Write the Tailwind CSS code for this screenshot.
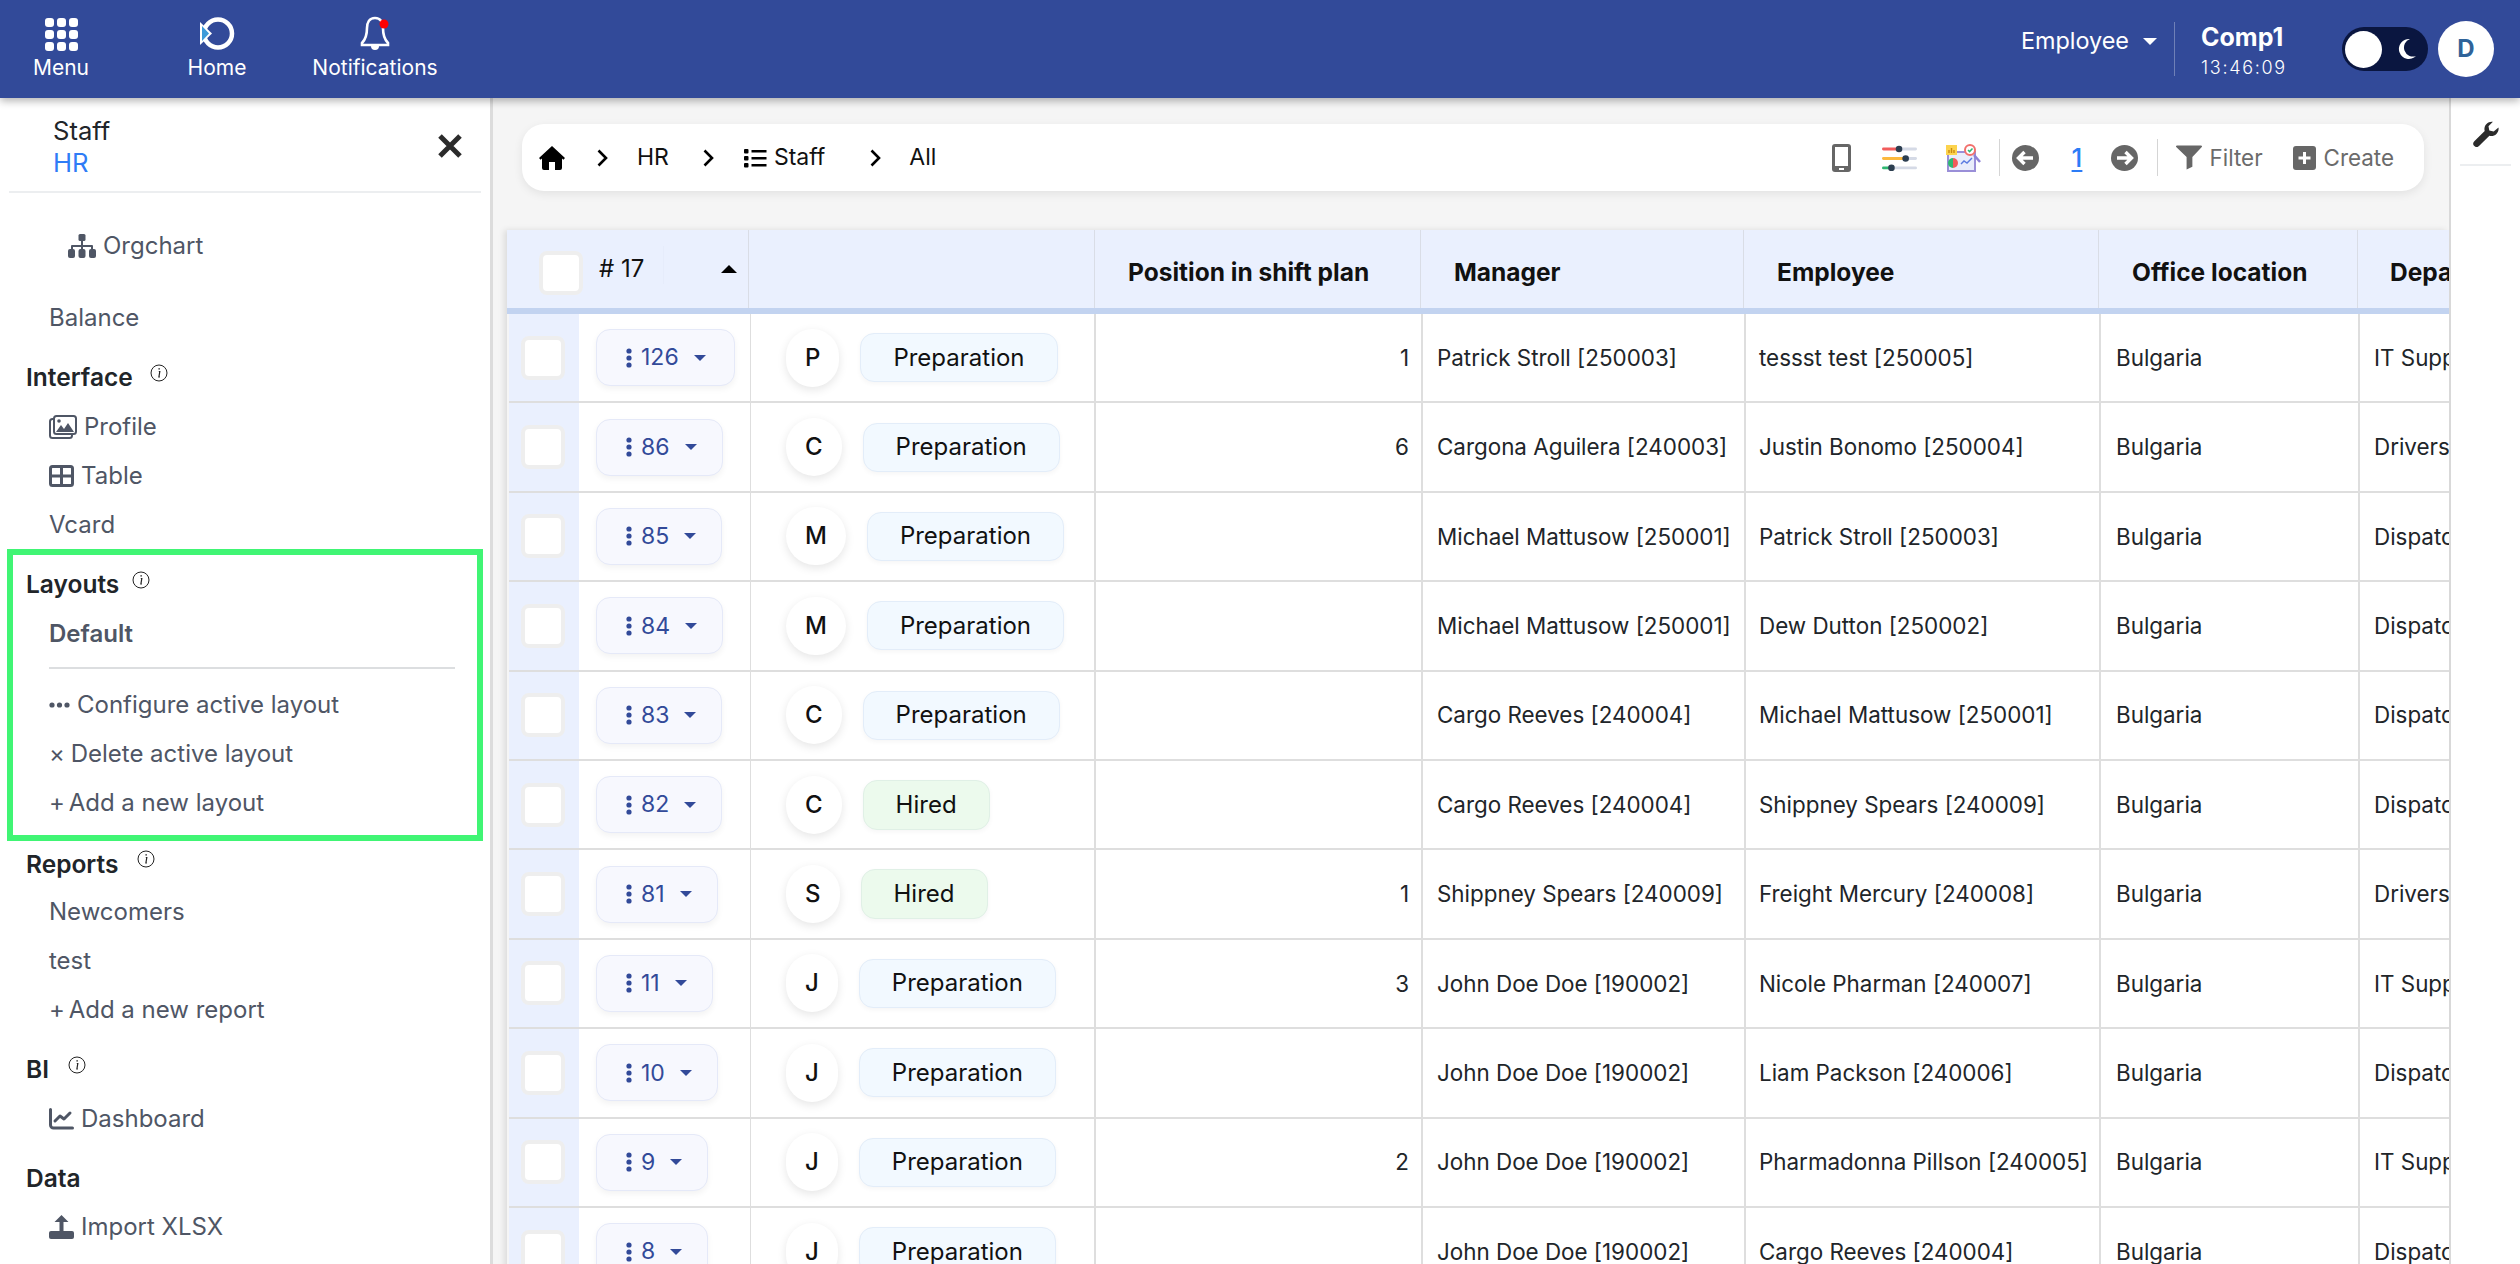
<!DOCTYPE html>
<html>
<head>
<meta charset="utf-8">
<title>Staff</title>
<script src="https://cdn.jsdelivr.net/npm/@tailwindcss/browser@4"></script>
</head>
<body class="m-0 font-['Inter',sans-serif]">
<div class="w-[2520px] h-[1264px] overflow-hidden flex flex-col bg-[#f5f5f5]">
  <!-- top bar -->
  <header class="relative z-10 h-[98px] shrink-0 bg-[#324a99] shadow-[0_3px_8px_rgba(0,0,0,0.3)] flex items-start text-white">
    <div class="w-[122px] flex flex-col items-center pt-[17px]">
      <svg width="34" height="34" viewBox="0 0 34 34" fill="#fff"><rect x="1" y="1" width="9" height="9" rx="3"/><rect x="13" y="1" width="9" height="9" rx="3"/><rect x="25" y="1" width="9" height="9" rx="3"/><rect x="1" y="13" width="9" height="9" rx="3"/><rect x="13" y="13" width="9" height="9" rx="3"/><rect x="25" y="13" width="9" height="9" rx="3"/><rect x="1" y="25" width="9" height="9" rx="3"/><rect x="13" y="25" width="9" height="9" rx="3"/><rect x="25" y="25" width="9" height="9" rx="3"/></svg>
      <span class="text-[21px] leading-[24px] mt-[5px]">Menu</span>
    </div>
    <div class="w-[190px] flex flex-col items-center pt-[16px]">
      <svg width="36" height="35" viewBox="0 0 36 35"><circle cx="19" cy="17.5" r="14" fill="none" stroke="#fff" stroke-width="4.5"/><path d="M1 6 L13 17.5 L1 29Z" fill="#fff"/><path d="M3 10 L10 17.5 L3 25Z" fill="#3d9ad9"/></svg>
      <span class="text-[21px] leading-[24px] mt-[5px]">Home</span>
    </div>
    <div class="w-[126px] flex flex-col items-center pt-[16px]">
      <svg width="36" height="35" viewBox="0 0 36 35"><path d="M18 2c-6 0-8 5-8 10 0 7-1 11-5 15v2h26v-2c-4-4-5-8-5-15 0-5-2-10-8-10Z" fill="none" stroke="#fff" stroke-width="2.6"/><path d="M14 30a4 4 0 0 0 8 0Z" fill="#fff"/><circle cx="27" cy="8" r="4.5" fill="#f00"/></svg>
      <span class="text-[21px] leading-[24px] mt-[5px] whitespace-nowrap">Notifications</span>
    </div>
    <div class="flex-1"></div>
    <div class="flex items-center h-[98px]">
      <span class="text-[23.4px] leading-[30px] -mt-[16px]">Employee</span>
      <span class="ml-[14px] -mt-[16px] w-0 h-0 border-x-[7px] border-x-transparent border-t-[7px] border-t-white"></span>
      <div class="ml-[17px] w-px h-[54px] bg-white/30"></div>
      <div class="ml-[26px] w-[141px] flex flex-col pt-[2px]">
        <span class="text-[25px] leading-[30px] font-bold">Comp1</span>
        <span class="text-[18px] leading-[22px] mt-[5px] font-light tracking-[1.7px]">13:46:09</span>
      </div>
      <div class="w-[86px] h-[44px] rounded-full bg-[#0a1640] flex items-center justify-between pl-[3px] pr-[11px]">
        <span class="w-[37px] h-[37px] rounded-full bg-white"></span>
        <svg width="20" height="22" viewBox="0 0 20 22"><path d="M13 1a10 10 0 1 0 6 17A9 9 0 0 1 13 1Z" fill="#fff"/></svg>
      </div>
      <div class="ml-[10px] mr-[26px] w-[56px] h-[56px] rounded-full bg-white flex items-center justify-center text-[#2f6399] font-bold text-[24px]">D</div>
    </div>
  </header>

  <div class="flex-1 flex min-h-0">
    <!-- sidebar -->
    <aside class="w-[493px] shrink-0 bg-white border-r-[3px] border-[#dcdcdc] overflow-hidden flex flex-col text-[24px] text-[#4f5665] pl-[7px]">
      <div class="relative ml-[2px] w-[472px] h-[95px] shrink-0 border-b-2 border-[#eceef0] pl-[44px] pt-[17px] text-[25.6px]">
        <div class="leading-[32px] text-[#212529]">Staff</div>
        <div class="leading-[32px] text-[#2f7cf6]">HR</div>
        <svg class="absolute left-[428px] top-[35px]" width="26" height="26" viewBox="0 0 26 26"><path d="M3 3 23 23M23 3 3 23" stroke="#2b2b2b" stroke-width="5" fill="none"/></svg>
      </div>
      <div class="h-[49px] mt-[28px] ml-[61px] flex items-center gap-[7px] shrink-0">
        <svg width="28" height="24" viewBox="0 0 28 24" fill="#4f5665"><rect x="10.5" y="0" width="7" height="7" rx="1.5"/><path d="M13 7h2v4h9a1 1 0 0 1 1 1v4h-2v-3h-8v3h-2v-3H5v3H3v-4a1 1 0 0 1 1-1h9Z"/><rect x="0" y="15" width="7" height="9" rx="2"/><rect x="10.5" y="15" width="7" height="9" rx="2"/><rect x="21" y="15" width="7" height="9" rx="2"/></svg>
        Orgchart
      </div>
      <div class="h-[49px] mt-[23px] ml-[42px] flex items-center shrink-0">Balance</div>
      <div class="h-[49px] mt-[11px] ml-[19px] flex items-center font-semibold text-[24.5px] text-[#212529] shrink-0">Interface
        <svg class="ml-[17px] -mt-[10px]" width="18" height="18" viewBox="0 0 18 18"><circle cx="9" cy="9" r="8" fill="none" stroke="#222" stroke-width="1"/><path d="M8.4 4.8h1.5M8.8 7.5h1L8.9 13h1" fill="none" stroke="#222" stroke-width="1.2"/></svg>
      </div>
      <div class="h-[49px] ml-[42px] flex items-center gap-[7px] shrink-0">
        <svg width="28" height="24" viewBox="0 0 28 24"><rect x="1" y="4" width="22" height="19" rx="2.5" fill="none" stroke="#4f5665" stroke-width="2" transform="translate(0 0)"/><rect x="5" y="1" width="22" height="18" rx="2.5" fill="#fff" stroke="#4f5665" stroke-width="2"/><path d="M7 17l5-7 3 4 4-6 6 9Z" fill="#4f5665"/><circle cx="10" cy="6" r="1.8" fill="#4f5665"/></svg>
        Profile
      </div>
      <div class="h-[49px] ml-[42px] flex items-center gap-[7px] shrink-0">
        <svg width="25" height="22" viewBox="0 0 25 22"><rect x="1.5" y="1.5" width="22" height="19" rx="2" fill="none" stroke="#4f5665" stroke-width="3"/><path d="M12.5 1v20M1 11h23" stroke="#4f5665" stroke-width="3"/></svg>
        Table
      </div>
      <div class="h-[49px] ml-[42px] flex items-center shrink-0">Vcard</div>

      <div class="w-[476px] h-[292px] shrink-0 border-[6px] border-[#40f574] pt-[5px] pl-[13px] pr-[22px]">
        <div class="h-[49px] flex items-center font-semibold text-[24.5px] text-[#212529]">Layouts
          <svg class="ml-[13px] -mt-[10px]" width="18" height="18" viewBox="0 0 18 18"><circle cx="9" cy="9" r="8" fill="none" stroke="#222" stroke-width="1"/><path d="M8.4 4.8h1.5M8.8 7.5h1L8.9 13h1" fill="none" stroke="#222" stroke-width="1.2"/></svg>
        </div>
        <div class="h-[49px] ml-[23px] flex items-center font-semibold">Default</div>
        <div class="h-[2px] ml-[23px] mt-[9px] bg-[#dcdee0]"></div>
        <div class="h-[49px] ml-[23px] mt-[11px] flex items-center gap-[7px]">
          <svg width="21" height="6" viewBox="0 0 21 6" fill="#4f5665"><circle cx="3" cy="3" r="2.6"/><circle cx="10.5" cy="3" r="2.6"/><circle cx="18" cy="3" r="2.6"/></svg>
          Configure active layout
        </div>
        <div class="h-[49px] ml-[23px] flex items-center whitespace-pre"><span class="-mr-[1px]">×</span> Delete active layout</div>
        <div class="h-[49px] ml-[23px] flex items-center whitespace-pre"><span class="-mr-[3px]">+</span> Add a new layout</div>
      </div>

      <div class="h-[46px] ml-[19px] flex items-center font-semibold text-[24.5px] text-[#212529] shrink-0">Reports
        <svg class="ml-[19px] -mt-[10px]" width="18" height="18" viewBox="0 0 18 18"><circle cx="9" cy="9" r="8" fill="none" stroke="#222" stroke-width="1"/><path d="M8.4 4.8h1.5M8.8 7.5h1L8.9 13h1" fill="none" stroke="#222" stroke-width="1.2"/></svg>
      </div>
      <div class="h-[49px] ml-[42px] flex items-center shrink-0">Newcomers</div>
      <div class="h-[49px] ml-[42px] flex items-center shrink-0">test</div>
      <div class="h-[49px] ml-[42px] flex items-center whitespace-pre shrink-0"><span class="-mr-[3px]">+</span> Add a new report</div>
      <div class="h-[49px] mt-[11px] ml-[19px] flex items-center font-semibold text-[24.5px] text-[#212529] shrink-0">BI
        <svg class="ml-[19px] -mt-[10px]" width="18" height="18" viewBox="0 0 18 18"><circle cx="9" cy="9" r="8" fill="none" stroke="#222" stroke-width="1"/><path d="M8.4 4.8h1.5M8.8 7.5h1L8.9 13h1" fill="none" stroke="#222" stroke-width="1.2"/></svg>
      </div>
      <div class="h-[49px] ml-[42px] flex items-center gap-[7px] shrink-0">
        <svg width="25" height="22" viewBox="0 0 25 22" fill="none" stroke="#4f5665" stroke-width="3" stroke-linecap="round" stroke-linejoin="round"><path d="M1.5 1.5V17a3 3 0 0 0 3 3h19"/><path d="M6 13l5-5 4 3 6-6"/></svg>
        Dashboard
      </div>
      <div class="h-[49px] mt-[11px] ml-[19px] flex items-center font-semibold text-[24.5px] text-[#212529] shrink-0">Data</div>
      <div class="h-[48px] ml-[42px] flex items-center gap-[7px] shrink-0">
        <svg width="25" height="24" viewBox="0 0 25 24" fill="#4f5665"><path d="M12.5 0l7 7h-5v9h-4V7h-5Z"/><rect x="0" y="16" width="25" height="8" rx="2"/></svg>
        Import XLSX
      </div>
    </aside>

    <!-- main -->
    <main class="flex-1 min-w-0 overflow-hidden flex flex-col pt-[26px]">
      <!-- breadcrumb -->
      <div class="ml-[29px] mr-[25px] h-[67px] shrink-0 bg-white rounded-[22px] shadow-[0_3px_10px_rgba(0,0,0,0.08)] flex items-center text-[23px] text-[#111] pl-[17px]">
        <svg width="26" height="24" viewBox="0 0 26 24" fill="#000"><path d="M13 0 0 12l1.6 1.8L3 12.6V22a2 2 0 0 0 2 2h5v-8h6v8h5a2 2 0 0 0 2-2v-9.4l1.4 1.2L26 12Z"/></svg>
        <svg class="ml-[32px]" width="11" height="18" viewBox="0 0 11 18" fill="none" stroke="#000" stroke-width="2.6"><path d="M1.5 1.5 9 9l-7.5 7.5"/></svg>
        <span class="ml-[29px]">HR</span>
        <svg class="ml-[34px]" width="11" height="18" viewBox="0 0 11 18" fill="none" stroke="#000" stroke-width="2.6"><path d="M1.5 1.5 9 9l-7.5 7.5"/></svg>
        <svg class="ml-[30px]" width="23" height="20" viewBox="0 0 23 20" fill="#000"><rect x="0" y="1" width="4.5" height="4.5" rx="1"/><rect x="0" y="8" width="4.5" height="4.5" rx="1"/><rect x="0" y="15" width="4.5" height="4.5" rx="1"/><rect x="7.5" y="2" width="15" height="2.5"/><rect x="7.5" y="9" width="15" height="2.5"/><rect x="7.5" y="16" width="15" height="2.5"/></svg>
        <span class="ml-[7px]">Staff</span>
        <svg class="ml-[45px]" width="11" height="18" viewBox="0 0 11 18" fill="none" stroke="#000" stroke-width="2.6"><path d="M1.5 1.5 9 9l-7.5 7.5"/></svg>
        <span class="ml-[28px]">All</span>
        <div class="flex-1"></div>
        <svg width="19" height="28" viewBox="0 0 19 28"><rect x="0" y="0" width="19" height="28" rx="3" fill="#666"/><rect x="3" y="3" width="13" height="19" fill="#fff"/><rect x="7" y="24" width="5" height="2" fill="#fff"/></svg>
        <svg class="ml-[31px]" width="35" height="26" viewBox="0 0 37 26"><rect x="0" y="2" width="18" height="3" rx="1.5" fill="#f25c5c"/><rect x="18" y="2" width="19" height="3" rx="1.5" fill="#d5dae6"/><circle cx="18" cy="3.5" r="3.5" fill="#2c3e50"/><rect x="0" y="12" width="25" height="3" rx="1.5" fill="#fcb93e"/><rect x="25" y="12" width="12" height="3" rx="1.5" fill="#d5dae6"/><circle cx="25" cy="13.5" r="3.5" fill="#2c3e50"/><rect x="0" y="22" width="10" height="3" rx="1.5" fill="#2fb872"/><rect x="10" y="22" width="27" height="3" rx="1.5" fill="#d5dae6"/><circle cx="10" cy="23.5" r="3.5" fill="#2c3e50"/></svg>
        <svg class="ml-[29px]" width="35" height="28" viewBox="0 0 35 28"><rect x="2" y="8" width="27" height="19" fill="#e9edfb" stroke="#9a8fd8" stroke-width="2"/><rect x="0" y="1" width="11" height="10" fill="#fcd34d"/><path d="M3 9V6M5.5 9V4M8 9V6" stroke="#c98a12" stroke-width="1.4"/><path d="M7 14a5 5 0 1 1 0 10Z" fill="#f25c5c"/><path d="M7 14a5 5 0 1 0 0 10Z" fill="#2fb872"/><path d="M15 20l3-3 3 2 5-5" fill="none" stroke="#5b7be0" stroke-width="1.4"/><circle cx="24" cy="6" r="5" fill="#fff" stroke="#f2706c" stroke-width="2"/><path d="M22 6l1.6 1.6L26.5 4.5" fill="none" stroke="#2fb872" stroke-width="1.5"/><path d="M28 11l6 7" stroke="#8f83d6" stroke-width="2.5"/></svg>
        <div class="ml-[18px] w-px h-[37px] bg-[#d5d5d5]"></div>
        <svg class="ml-[12px]" width="27" height="26" viewBox="0 0 27 26"><ellipse cx="13.5" cy="13" rx="13.5" ry="13" fill="#666"/><path d="M21 13H7M12.5 7 6.5 13l6 6" fill="none" stroke="#fff" stroke-width="3.4"/></svg>
        <span class="ml-[33px] text-[#2c7cf6] underline underline-offset-[3px] text-[26px] font-medium w-[13px]">1</span>
        <svg class="ml-[26px]" width="27" height="26" viewBox="0 0 27 26"><ellipse cx="13.5" cy="13" rx="13.5" ry="13" fill="#666"/><path d="M6 13h14M14.5 7l6 6-6 6" fill="none" stroke="#fff" stroke-width="3.4"/></svg>
        <div class="ml-[19px] w-px h-[37px] bg-[#d5d5d5]"></div>
        <svg class="ml-[18px]" width="26" height="25" viewBox="0 0 27 25" fill="#666"><path d="M1 0h25a1 1 0 0 1 .8 1.6L17 12v10l-6 3V12L.2 1.6A1 1 0 0 1 1 0Z"/></svg>
        <span class="ml-[8px] text-[22.4px] text-[#6b6b6b]">Filter</span>
        <svg class="ml-[30px]" width="23" height="24" viewBox="0 0 23 24"><rect width="23" height="24" rx="3" fill="#666"/><path d="M11.5 6v12M5.5 12h12" stroke="#fff" stroke-width="3"/></svg>
        <span class="ml-[8px] mr-[30px] text-[22.4px] text-[#6b6b6b]">Create</span>
      </div>

      <!-- table -->
      <div class="ml-[14px] mt-[39px] w-[1942px] shrink-0 shadow-[-3px_0_6px_rgba(0,0,0,0.1)] overflow-hidden">
        <!-- head -->
        <div class="flex h-[84px] bg-[#eaf0fe] border-b-[6px] border-[#c2d3f0] text-[24.5px] font-bold text-[#111]">
          <div class="w-[242px] shrink-0 border-r border-[#d9dde6] relative flex items-center pl-[32px] font-normal text-[24px]">
            <span class="block w-[44px] h-[44px] rounded-[8px] bg-white border-[4px] border-[#eeeeee] mt-[8px]"></span>
            <span class="ml-[16px] -mt-[1px]">#&nbsp;17</span>
            <span class="absolute left-[156px] top-[16px] bottom-[24px] w-px bg-[#e6ecfb]"></span>
            <span class="absolute left-[214px] top-[35px] w-0 h-0 border-x-[8px] border-x-transparent border-b-[8px] border-b-black"></span>
          </div>
          <div class="w-[346px] shrink-0 border-r border-[#d9dde6]"></div>
          <div class="w-[326px] shrink-0 border-r border-[#d9dde6] flex items-center pl-[33px] pt-[6px] whitespace-nowrap">Position in shift plan</div>
          <div class="w-[323px] shrink-0 border-r border-[#d9dde6] flex items-center pl-[33px] pt-[6px]">Manager</div>
          <div class="w-[355px] shrink-0 border-r border-[#d9dde6] flex items-center pl-[33px] pt-[6px]">Employee</div>
          <div class="w-[259px] shrink-0 border-r border-[#d9dde6] flex items-center pl-[33px] pt-[6px]">Office location</div>
          <div class="flex-1 flex items-center pl-[32px] pt-[6px]">Department</div>
        </div>

        <!-- rows -->
        <div class="flex h-[89.4px] ml-[2px] bg-white border-b-2 border-[#dedede] text-[22.4px] text-[#212529]">
          <div class="w-[70px] shrink-0 bg-[#eaf0fe] flex items-center pl-[12px]"><span class="block w-[44px] h-[44px] rounded-[8px] bg-white border-[4px] border-[#eeeeee]"></span></div>
          <div class="w-[172px] shrink-0 border-r border-[#dedede] flex items-center pl-[17px]">
            <div class="h-[57px] flex items-center pl-[29px] pr-[28px] rounded-[14px] bg-[#f7f8fe] border border-[#e5e9f8] shadow-[0_3px_6px_rgba(0,0,0,0.05)] text-[#324a99] text-[23px]">
              <svg width="6" height="20" viewBox="0 0 6 20" fill="#324a99"><circle cx="3" cy="3" r="2.6"/><circle cx="3" cy="10" r="2.6"/><circle cx="3" cy="17" r="2.6"/></svg>
              <span class="ml-[9px]">126</span>
              <span class="ml-[15px] w-0 h-0 border-x-[6px] border-x-transparent border-t-[6px] border-t-[#324a99]"></span>
            </div>
          </div>
          <div class="w-[345px] shrink-0 border-r-2 border-[#dedede] flex items-center pl-[35px] gap-[21px] text-[#111] text-[24px]">
            <span class="h-[58px] px-[19px] rounded-full bg-white shadow-[0_3px_10px_rgba(0,0,0,0.1)] flex items-center font-medium">P</span>
            <span class="h-[49px] px-[32px] rounded-[14px] bg-[#f2f9ff] border border-[#e3edf9] shadow-[0_2px_5px_rgba(0,0,0,0.04)] flex items-center">Preparation</span>
          </div>
          <div class="w-[327px] shrink-0 border-r-2 border-[#dedede] flex items-center justify-end pr-[12px]">1</div>
          <div class="w-[323px] shrink-0 border-r-2 border-[#dedede] flex items-center pl-[14px] whitespace-nowrap">Patrick Stroll [250003]</div>
          <div class="w-[355px] shrink-0 border-r-2 border-[#dedede] flex items-center pl-[13px] whitespace-nowrap">tessst test [250005]</div>
          <div class="w-[259px] shrink-0 border-r-2 border-[#dedede] flex items-center pl-[15px]">Bulgaria</div>
          <div class="flex-1 flex items-center pl-[14px] whitespace-nowrap">IT Support</div>
        </div>

        <div class="flex h-[89.4px] ml-[2px] bg-white border-b-2 border-[#dedede] text-[22.4px] text-[#212529]">
          <div class="w-[70px] shrink-0 bg-[#eaf0fe] flex items-center pl-[12px]"><span class="block w-[44px] h-[44px] rounded-[8px] bg-white border-[4px] border-[#eeeeee]"></span></div>
          <div class="w-[172px] shrink-0 border-r border-[#dedede] flex items-center pl-[17px]">
            <div class="h-[57px] flex items-center pl-[29px] pr-[25px] rounded-[14px] bg-[#f7f8fe] border border-[#e5e9f8] shadow-[0_3px_6px_rgba(0,0,0,0.05)] text-[#324a99] text-[23px]">
              <svg width="6" height="20" viewBox="0 0 6 20" fill="#324a99"><circle cx="3" cy="3" r="2.6"/><circle cx="3" cy="10" r="2.6"/><circle cx="3" cy="17" r="2.6"/></svg>
              <span class="ml-[9px]">86</span>
              <span class="ml-[15px] w-0 h-0 border-x-[6px] border-x-transparent border-t-[6px] border-t-[#324a99]"></span>
            </div>
          </div>
          <div class="w-[345px] shrink-0 border-r-2 border-[#dedede] flex items-center pl-[35px] gap-[21px] text-[#111] text-[24px]">
            <span class="h-[58px] px-[19px] rounded-full bg-white shadow-[0_3px_10px_rgba(0,0,0,0.1)] flex items-center font-medium">C</span>
            <span class="h-[49px] px-[32px] rounded-[14px] bg-[#f2f9ff] border border-[#e3edf9] shadow-[0_2px_5px_rgba(0,0,0,0.04)] flex items-center">Preparation</span>
          </div>
          <div class="w-[327px] shrink-0 border-r-2 border-[#dedede] flex items-center justify-end pr-[12px]">6</div>
          <div class="w-[323px] shrink-0 border-r-2 border-[#dedede] flex items-center pl-[14px] whitespace-nowrap">Cargona Aguilera [240003]</div>
          <div class="w-[355px] shrink-0 border-r-2 border-[#dedede] flex items-center pl-[13px] whitespace-nowrap">Justin Bonomo [250004]</div>
          <div class="w-[259px] shrink-0 border-r-2 border-[#dedede] flex items-center pl-[15px]">Bulgaria</div>
          <div class="flex-1 flex items-center pl-[14px] whitespace-nowrap">Drivers</div>
        </div>

        <div class="flex h-[89.4px] ml-[2px] bg-white border-b-2 border-[#dedede] text-[22.4px] text-[#212529]">
          <div class="w-[70px] shrink-0 bg-[#eaf0fe] flex items-center pl-[12px]"><span class="block w-[44px] h-[44px] rounded-[8px] bg-white border-[4px] border-[#eeeeee]"></span></div>
          <div class="w-[172px] shrink-0 border-r border-[#dedede] flex items-center pl-[17px]">
            <div class="h-[57px] flex items-center pl-[29px] pr-[25px] rounded-[14px] bg-[#f7f8fe] border border-[#e5e9f8] shadow-[0_3px_6px_rgba(0,0,0,0.05)] text-[#324a99] text-[23px]">
              <svg width="6" height="20" viewBox="0 0 6 20" fill="#324a99"><circle cx="3" cy="3" r="2.6"/><circle cx="3" cy="10" r="2.6"/><circle cx="3" cy="17" r="2.6"/></svg>
              <span class="ml-[9px]">85</span>
              <span class="ml-[15px] w-0 h-0 border-x-[6px] border-x-transparent border-t-[6px] border-t-[#324a99]"></span>
            </div>
          </div>
          <div class="w-[345px] shrink-0 border-r-2 border-[#dedede] flex items-center pl-[35px] gap-[21px] text-[#111] text-[24px]">
            <span class="h-[58px] px-[19px] rounded-full bg-white shadow-[0_3px_10px_rgba(0,0,0,0.1)] flex items-center font-medium">M</span>
            <span class="h-[49px] px-[32px] rounded-[14px] bg-[#f2f9ff] border border-[#e3edf9] shadow-[0_2px_5px_rgba(0,0,0,0.04)] flex items-center">Preparation</span>
          </div>
          <div class="w-[327px] shrink-0 border-r-2 border-[#dedede]"></div>
          <div class="w-[323px] shrink-0 border-r-2 border-[#dedede] flex items-center pl-[14px] whitespace-nowrap">Michael Mattusow [250001]</div>
          <div class="w-[355px] shrink-0 border-r-2 border-[#dedede] flex items-center pl-[13px] whitespace-nowrap">Patrick Stroll [250003]</div>
          <div class="w-[259px] shrink-0 border-r-2 border-[#dedede] flex items-center pl-[15px]">Bulgaria</div>
          <div class="flex-1 flex items-center pl-[14px] whitespace-nowrap">Dispatch</div>
        </div>

        <div class="flex h-[89.4px] ml-[2px] bg-white border-b-2 border-[#dedede] text-[22.4px] text-[#212529]">
          <div class="w-[70px] shrink-0 bg-[#eaf0fe] flex items-center pl-[12px]"><span class="block w-[44px] h-[44px] rounded-[8px] bg-white border-[4px] border-[#eeeeee]"></span></div>
          <div class="w-[172px] shrink-0 border-r border-[#dedede] flex items-center pl-[17px]">
            <div class="h-[57px] flex items-center pl-[29px] pr-[25px] rounded-[14px] bg-[#f7f8fe] border border-[#e5e9f8] shadow-[0_3px_6px_rgba(0,0,0,0.05)] text-[#324a99] text-[23px]">
              <svg width="6" height="20" viewBox="0 0 6 20" fill="#324a99"><circle cx="3" cy="3" r="2.6"/><circle cx="3" cy="10" r="2.6"/><circle cx="3" cy="17" r="2.6"/></svg>
              <span class="ml-[9px]">84</span>
              <span class="ml-[15px] w-0 h-0 border-x-[6px] border-x-transparent border-t-[6px] border-t-[#324a99]"></span>
            </div>
          </div>
          <div class="w-[345px] shrink-0 border-r-2 border-[#dedede] flex items-center pl-[35px] gap-[21px] text-[#111] text-[24px]">
            <span class="h-[58px] px-[19px] rounded-full bg-white shadow-[0_3px_10px_rgba(0,0,0,0.1)] flex items-center font-medium">M</span>
            <span class="h-[49px] px-[32px] rounded-[14px] bg-[#f2f9ff] border border-[#e3edf9] shadow-[0_2px_5px_rgba(0,0,0,0.04)] flex items-center">Preparation</span>
          </div>
          <div class="w-[327px] shrink-0 border-r-2 border-[#dedede]"></div>
          <div class="w-[323px] shrink-0 border-r-2 border-[#dedede] flex items-center pl-[14px] whitespace-nowrap">Michael Mattusow [250001]</div>
          <div class="w-[355px] shrink-0 border-r-2 border-[#dedede] flex items-center pl-[13px] whitespace-nowrap">Dew Dutton [250002]</div>
          <div class="w-[259px] shrink-0 border-r-2 border-[#dedede] flex items-center pl-[15px]">Bulgaria</div>
          <div class="flex-1 flex items-center pl-[14px] whitespace-nowrap">Dispatch</div>
        </div>

        <div class="flex h-[89.4px] ml-[2px] bg-white border-b-2 border-[#dedede] text-[22.4px] text-[#212529]">
          <div class="w-[70px] shrink-0 bg-[#eaf0fe] flex items-center pl-[12px]"><span class="block w-[44px] h-[44px] rounded-[8px] bg-white border-[4px] border-[#eeeeee]"></span></div>
          <div class="w-[172px] shrink-0 border-r border-[#dedede] flex items-center pl-[17px]">
            <div class="h-[57px] flex items-center pl-[29px] pr-[25px] rounded-[14px] bg-[#f7f8fe] border border-[#e5e9f8] shadow-[0_3px_6px_rgba(0,0,0,0.05)] text-[#324a99] text-[23px]">
              <svg width="6" height="20" viewBox="0 0 6 20" fill="#324a99"><circle cx="3" cy="3" r="2.6"/><circle cx="3" cy="10" r="2.6"/><circle cx="3" cy="17" r="2.6"/></svg>
              <span class="ml-[9px]">83</span>
              <span class="ml-[15px] w-0 h-0 border-x-[6px] border-x-transparent border-t-[6px] border-t-[#324a99]"></span>
            </div>
          </div>
          <div class="w-[345px] shrink-0 border-r-2 border-[#dedede] flex items-center pl-[35px] gap-[21px] text-[#111] text-[24px]">
            <span class="h-[58px] px-[19px] rounded-full bg-white shadow-[0_3px_10px_rgba(0,0,0,0.1)] flex items-center font-medium">C</span>
            <span class="h-[49px] px-[32px] rounded-[14px] bg-[#f2f9ff] border border-[#e3edf9] shadow-[0_2px_5px_rgba(0,0,0,0.04)] flex items-center">Preparation</span>
          </div>
          <div class="w-[327px] shrink-0 border-r-2 border-[#dedede]"></div>
          <div class="w-[323px] shrink-0 border-r-2 border-[#dedede] flex items-center pl-[14px] whitespace-nowrap">Cargo Reeves [240004]</div>
          <div class="w-[355px] shrink-0 border-r-2 border-[#dedede] flex items-center pl-[13px] whitespace-nowrap">Michael Mattusow [250001]</div>
          <div class="w-[259px] shrink-0 border-r-2 border-[#dedede] flex items-center pl-[15px]">Bulgaria</div>
          <div class="flex-1 flex items-center pl-[14px] whitespace-nowrap">Dispatch</div>
        </div>

        <div class="flex h-[89.4px] ml-[2px] bg-white border-b-2 border-[#dedede] text-[22.4px] text-[#212529]">
          <div class="w-[70px] shrink-0 bg-[#eaf0fe] flex items-center pl-[12px]"><span class="block w-[44px] h-[44px] rounded-[8px] bg-white border-[4px] border-[#eeeeee]"></span></div>
          <div class="w-[172px] shrink-0 border-r border-[#dedede] flex items-center pl-[17px]">
            <div class="h-[57px] flex items-center pl-[29px] pr-[25px] rounded-[14px] bg-[#f7f8fe] border border-[#e5e9f8] shadow-[0_3px_6px_rgba(0,0,0,0.05)] text-[#324a99] text-[23px]">
              <svg width="6" height="20" viewBox="0 0 6 20" fill="#324a99"><circle cx="3" cy="3" r="2.6"/><circle cx="3" cy="10" r="2.6"/><circle cx="3" cy="17" r="2.6"/></svg>
              <span class="ml-[9px]">82</span>
              <span class="ml-[15px] w-0 h-0 border-x-[6px] border-x-transparent border-t-[6px] border-t-[#324a99]"></span>
            </div>
          </div>
          <div class="w-[345px] shrink-0 border-r-2 border-[#dedede] flex items-center pl-[35px] gap-[21px] text-[#111] text-[24px]">
            <span class="h-[58px] px-[19px] rounded-full bg-white shadow-[0_3px_10px_rgba(0,0,0,0.1)] flex items-center font-medium">C</span>
            <span class="h-[50px] px-[32px] rounded-[14px] bg-[#ecfaed] border border-[#e0f0e6] shadow-[0_2px_5px_rgba(0,0,0,0.04)] flex items-center">Hired</span>
          </div>
          <div class="w-[327px] shrink-0 border-r-2 border-[#dedede]"></div>
          <div class="w-[323px] shrink-0 border-r-2 border-[#dedede] flex items-center pl-[14px] whitespace-nowrap">Cargo Reeves [240004]</div>
          <div class="w-[355px] shrink-0 border-r-2 border-[#dedede] flex items-center pl-[13px] whitespace-nowrap">Shippney Spears [240009]</div>
          <div class="w-[259px] shrink-0 border-r-2 border-[#dedede] flex items-center pl-[15px]">Bulgaria</div>
          <div class="flex-1 flex items-center pl-[14px] whitespace-nowrap">Dispatch</div>
        </div>

        <div class="flex h-[89.4px] ml-[2px] bg-white border-b-2 border-[#dedede] text-[22.4px] text-[#212529]">
          <div class="w-[70px] shrink-0 bg-[#eaf0fe] flex items-center pl-[12px]"><span class="block w-[44px] h-[44px] rounded-[8px] bg-white border-[4px] border-[#eeeeee]"></span></div>
          <div class="w-[172px] shrink-0 border-r border-[#dedede] flex items-center pl-[17px]">
            <div class="h-[57px] flex items-center pl-[29px] pr-[25px] rounded-[14px] bg-[#f7f8fe] border border-[#e5e9f8] shadow-[0_3px_6px_rgba(0,0,0,0.05)] text-[#324a99] text-[23px]">
              <svg width="6" height="20" viewBox="0 0 6 20" fill="#324a99"><circle cx="3" cy="3" r="2.6"/><circle cx="3" cy="10" r="2.6"/><circle cx="3" cy="17" r="2.6"/></svg>
              <span class="ml-[9px]">81</span>
              <span class="ml-[15px] w-0 h-0 border-x-[6px] border-x-transparent border-t-[6px] border-t-[#324a99]"></span>
            </div>
          </div>
          <div class="w-[345px] shrink-0 border-r-2 border-[#dedede] flex items-center pl-[35px] gap-[21px] text-[#111] text-[24px]">
            <span class="h-[58px] px-[19px] rounded-full bg-white shadow-[0_3px_10px_rgba(0,0,0,0.1)] flex items-center font-medium">S</span>
            <span class="h-[50px] px-[32px] rounded-[14px] bg-[#ecfaed] border border-[#e0f0e6] shadow-[0_2px_5px_rgba(0,0,0,0.04)] flex items-center">Hired</span>
          </div>
          <div class="w-[327px] shrink-0 border-r-2 border-[#dedede] flex items-center justify-end pr-[12px]">1</div>
          <div class="w-[323px] shrink-0 border-r-2 border-[#dedede] flex items-center pl-[14px] whitespace-nowrap">Shippney Spears [240009]</div>
          <div class="w-[355px] shrink-0 border-r-2 border-[#dedede] flex items-center pl-[13px] whitespace-nowrap">Freight Mercury [240008]</div>
          <div class="w-[259px] shrink-0 border-r-2 border-[#dedede] flex items-center pl-[15px]">Bulgaria</div>
          <div class="flex-1 flex items-center pl-[14px] whitespace-nowrap">Drivers</div>
        </div>

        <div class="flex h-[89.4px] ml-[2px] bg-white border-b-2 border-[#dedede] text-[22.4px] text-[#212529]">
          <div class="w-[70px] shrink-0 bg-[#eaf0fe] flex items-center pl-[12px]"><span class="block w-[44px] h-[44px] rounded-[8px] bg-white border-[4px] border-[#eeeeee]"></span></div>
          <div class="w-[172px] shrink-0 border-r border-[#dedede] flex items-center pl-[17px]">
            <div class="h-[57px] flex items-center pl-[29px] pr-[25px] rounded-[14px] bg-[#f7f8fe] border border-[#e5e9f8] shadow-[0_3px_6px_rgba(0,0,0,0.05)] text-[#324a99] text-[23px]">
              <svg width="6" height="20" viewBox="0 0 6 20" fill="#324a99"><circle cx="3" cy="3" r="2.6"/><circle cx="3" cy="10" r="2.6"/><circle cx="3" cy="17" r="2.6"/></svg>
              <span class="ml-[9px]">11</span>
              <span class="ml-[15px] w-0 h-0 border-x-[6px] border-x-transparent border-t-[6px] border-t-[#324a99]"></span>
            </div>
          </div>
          <div class="w-[345px] shrink-0 border-r-2 border-[#dedede] flex items-center pl-[35px] gap-[21px] text-[#111] text-[24px]">
            <span class="h-[58px] px-[19px] rounded-full bg-white shadow-[0_3px_10px_rgba(0,0,0,0.1)] flex items-center font-medium">J</span>
            <span class="h-[49px] px-[32px] rounded-[14px] bg-[#f2f9ff] border border-[#e3edf9] shadow-[0_2px_5px_rgba(0,0,0,0.04)] flex items-center">Preparation</span>
          </div>
          <div class="w-[327px] shrink-0 border-r-2 border-[#dedede] flex items-center justify-end pr-[12px]">3</div>
          <div class="w-[323px] shrink-0 border-r-2 border-[#dedede] flex items-center pl-[14px] whitespace-nowrap">John Doe Doe [190002]</div>
          <div class="w-[355px] shrink-0 border-r-2 border-[#dedede] flex items-center pl-[13px] whitespace-nowrap">Nicole Pharman [240007]</div>
          <div class="w-[259px] shrink-0 border-r-2 border-[#dedede] flex items-center pl-[15px]">Bulgaria</div>
          <div class="flex-1 flex items-center pl-[14px] whitespace-nowrap">IT Support</div>
        </div>

        <div class="flex h-[89.4px] ml-[2px] bg-white border-b-2 border-[#dedede] text-[22.4px] text-[#212529]">
          <div class="w-[70px] shrink-0 bg-[#eaf0fe] flex items-center pl-[12px]"><span class="block w-[44px] h-[44px] rounded-[8px] bg-white border-[4px] border-[#eeeeee]"></span></div>
          <div class="w-[172px] shrink-0 border-r border-[#dedede] flex items-center pl-[17px]">
            <div class="h-[57px] flex items-center pl-[29px] pr-[25px] rounded-[14px] bg-[#f7f8fe] border border-[#e5e9f8] shadow-[0_3px_6px_rgba(0,0,0,0.05)] text-[#324a99] text-[23px]">
              <svg width="6" height="20" viewBox="0 0 6 20" fill="#324a99"><circle cx="3" cy="3" r="2.6"/><circle cx="3" cy="10" r="2.6"/><circle cx="3" cy="17" r="2.6"/></svg>
              <span class="ml-[9px]">10</span>
              <span class="ml-[15px] w-0 h-0 border-x-[6px] border-x-transparent border-t-[6px] border-t-[#324a99]"></span>
            </div>
          </div>
          <div class="w-[345px] shrink-0 border-r-2 border-[#dedede] flex items-center pl-[35px] gap-[21px] text-[#111] text-[24px]">
            <span class="h-[58px] px-[19px] rounded-full bg-white shadow-[0_3px_10px_rgba(0,0,0,0.1)] flex items-center font-medium">J</span>
            <span class="h-[49px] px-[32px] rounded-[14px] bg-[#f2f9ff] border border-[#e3edf9] shadow-[0_2px_5px_rgba(0,0,0,0.04)] flex items-center">Preparation</span>
          </div>
          <div class="w-[327px] shrink-0 border-r-2 border-[#dedede]"></div>
          <div class="w-[323px] shrink-0 border-r-2 border-[#dedede] flex items-center pl-[14px] whitespace-nowrap">John Doe Doe [190002]</div>
          <div class="w-[355px] shrink-0 border-r-2 border-[#dedede] flex items-center pl-[13px] whitespace-nowrap">Liam Packson [240006]</div>
          <div class="w-[259px] shrink-0 border-r-2 border-[#dedede] flex items-center pl-[15px]">Bulgaria</div>
          <div class="flex-1 flex items-center pl-[14px] whitespace-nowrap">Dispatch</div>
        </div>

        <div class="flex h-[89.4px] ml-[2px] bg-white border-b-2 border-[#dedede] text-[22.4px] text-[#212529]">
          <div class="w-[70px] shrink-0 bg-[#eaf0fe] flex items-center pl-[12px]"><span class="block w-[44px] h-[44px] rounded-[8px] bg-white border-[4px] border-[#eeeeee]"></span></div>
          <div class="w-[172px] shrink-0 border-r border-[#dedede] flex items-center pl-[17px]">
            <div class="h-[57px] flex items-center pl-[29px] pr-[25px] rounded-[14px] bg-[#f7f8fe] border border-[#e5e9f8] shadow-[0_3px_6px_rgba(0,0,0,0.05)] text-[#324a99] text-[23px]">
              <svg width="6" height="20" viewBox="0 0 6 20" fill="#324a99"><circle cx="3" cy="3" r="2.6"/><circle cx="3" cy="10" r="2.6"/><circle cx="3" cy="17" r="2.6"/></svg>
              <span class="ml-[9px]">9</span>
              <span class="ml-[15px] w-0 h-0 border-x-[6px] border-x-transparent border-t-[6px] border-t-[#324a99]"></span>
            </div>
          </div>
          <div class="w-[345px] shrink-0 border-r-2 border-[#dedede] flex items-center pl-[35px] gap-[21px] text-[#111] text-[24px]">
            <span class="h-[58px] px-[19px] rounded-full bg-white shadow-[0_3px_10px_rgba(0,0,0,0.1)] flex items-center font-medium">J</span>
            <span class="h-[49px] px-[32px] rounded-[14px] bg-[#f2f9ff] border border-[#e3edf9] shadow-[0_2px_5px_rgba(0,0,0,0.04)] flex items-center">Preparation</span>
          </div>
          <div class="w-[327px] shrink-0 border-r-2 border-[#dedede] flex items-center justify-end pr-[12px]">2</div>
          <div class="w-[323px] shrink-0 border-r-2 border-[#dedede] flex items-center pl-[14px] whitespace-nowrap">John Doe Doe [190002]</div>
          <div class="w-[355px] shrink-0 border-r-2 border-[#dedede] flex items-center pl-[13px] whitespace-nowrap">Pharmadonna Pillson [240005]</div>
          <div class="w-[259px] shrink-0 border-r-2 border-[#dedede] flex items-center pl-[15px]">Bulgaria</div>
          <div class="flex-1 flex items-center pl-[14px] whitespace-nowrap">IT Support</div>
        </div>

        <div class="flex h-[89.4px] ml-[2px] bg-white border-b-2 border-[#dedede] text-[22.4px] text-[#212529]">
          <div class="w-[70px] shrink-0 bg-[#eaf0fe] flex items-center pl-[12px]"><span class="block w-[44px] h-[44px] rounded-[8px] bg-white border-[4px] border-[#eeeeee]"></span></div>
          <div class="w-[172px] shrink-0 border-r border-[#dedede] flex items-center pl-[17px]">
            <div class="h-[57px] flex items-center pl-[29px] pr-[25px] rounded-[14px] bg-[#f7f8fe] border border-[#e5e9f8] shadow-[0_3px_6px_rgba(0,0,0,0.05)] text-[#324a99] text-[23px]">
              <svg width="6" height="20" viewBox="0 0 6 20" fill="#324a99"><circle cx="3" cy="3" r="2.6"/><circle cx="3" cy="10" r="2.6"/><circle cx="3" cy="17" r="2.6"/></svg>
              <span class="ml-[9px]">8</span>
              <span class="ml-[15px] w-0 h-0 border-x-[6px] border-x-transparent border-t-[6px] border-t-[#324a99]"></span>
            </div>
          </div>
          <div class="w-[345px] shrink-0 border-r-2 border-[#dedede] flex items-center pl-[35px] gap-[21px] text-[#111] text-[24px]">
            <span class="h-[58px] px-[19px] rounded-full bg-white shadow-[0_3px_10px_rgba(0,0,0,0.1)] flex items-center font-medium">J</span>
            <span class="h-[49px] px-[32px] rounded-[14px] bg-[#f2f9ff] border border-[#e3edf9] shadow-[0_2px_5px_rgba(0,0,0,0.04)] flex items-center">Preparation</span>
          </div>
          <div class="w-[327px] shrink-0 border-r-2 border-[#dedede]"></div>
          <div class="w-[323px] shrink-0 border-r-2 border-[#dedede] flex items-center pl-[14px] whitespace-nowrap">John Doe Doe [190002]</div>
          <div class="w-[355px] shrink-0 border-r-2 border-[#dedede] flex items-center pl-[13px] whitespace-nowrap">Cargo Reeves [240004]</div>
          <div class="w-[259px] shrink-0 border-r-2 border-[#dedede] flex items-center pl-[15px]">Bulgaria</div>
          <div class="flex-1 flex items-center pl-[14px] whitespace-nowrap">Dispatch</div>
        </div>
      </div>
    </main>

    <!-- right rail -->
    <aside class="w-[71px] shrink-0 bg-white border-l-2 border-[#d9d9d9] flex flex-col items-center">
      <div class="w-[51px] h-[68px] border-b-2 border-[#eceef0] flex items-start justify-center pt-[23px]">
        <svg width="26" height="26" viewBox="0 0 26 26" fill="#2b2b2b"><path d="M25.5 6.5c.4 2.3-.4 4.7-2.1 6.4-1.9 1.9-4.6 2.5-7 1.8L6 25a3.3 3.3 0 0 1-4.7-4.7l10.4-10.4c-.7-2.4-.1-5.1 1.8-7C15.2 1.2 17.6.4 19.9.8l-4.4 4.4.8 4.4 4.4.8Z"/></svg>
      </div>
    </aside>
  </div>
</div>
</body>
</html>
